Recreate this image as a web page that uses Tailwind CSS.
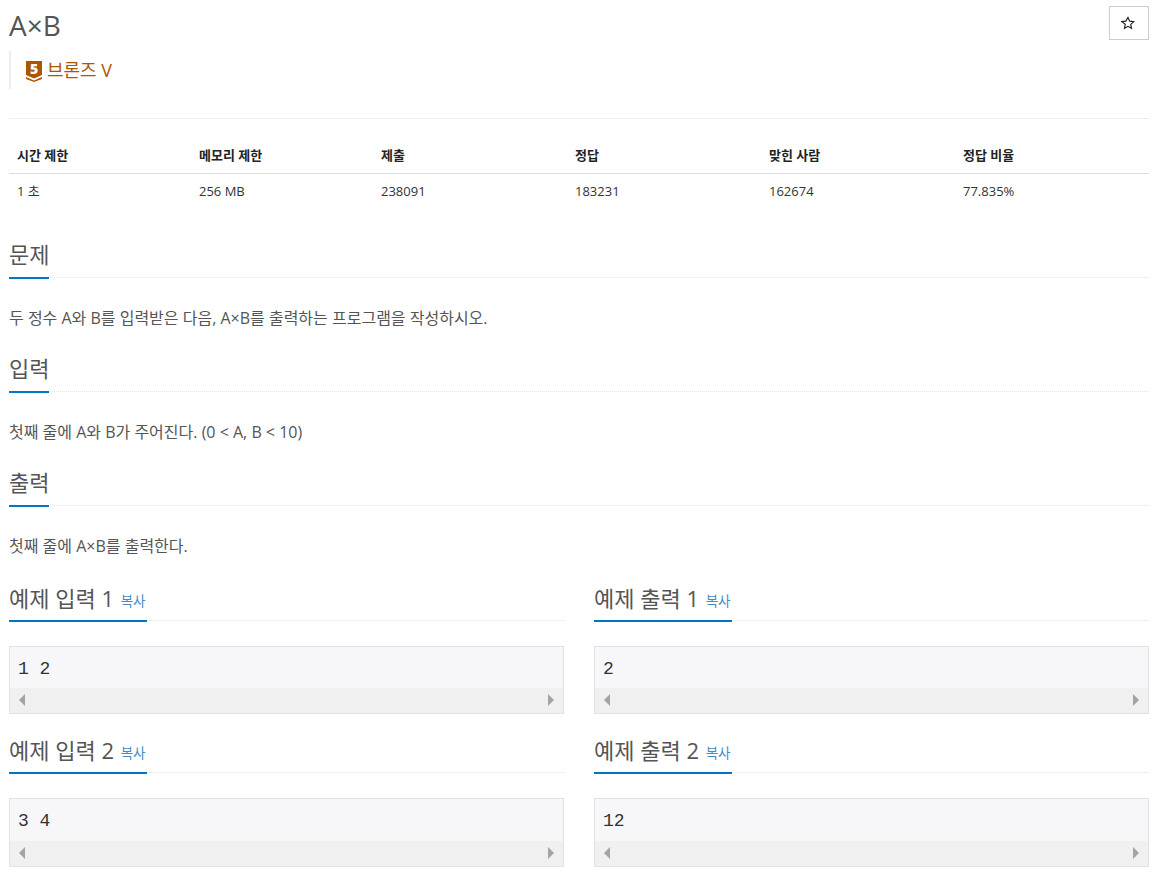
<!DOCTYPE html>
<html lang="ko">
  <head>
    <meta charset="UTF-8" />
    <title>A×B</title>
    <script src="https://cdn.jsdelivr.net/npm/@tailwindcss/browser@4"></script>
  </head>
  <body class="bg-white text-[#333] overflow-hidden font-['Open_Sans','Noto_Sans_CJK_KR',sans-serif]">
    <div class="w-[1164px] h-[878px] pl-[9px] pr-[15px]">
      <!-- Title -->
      <div class="flex justify-between h-[51px]">
        <h1 class="text-[28px] leading-[38px] mt-[6px] text-[#555]">A×B</h1>
        <button class="w-[40px] h-[34px] mt-[6px] border border-[#ccc] flex items-center justify-center">
          <svg class="-ml-[2px] -mt-[1px]" width="14" height="14" viewBox="0 0 24 24" fill="none" stroke="#222" stroke-width="2"><path d="M12 2.5l2.9 6.3 6.9.8-5.1 4.7 1.4 6.8-6.1-3.4-6.1 3.4 1.4-6.8L1.3 9.6l6.9-.8z" /></svg>
        </button>
      </div>
      <div class="h-[38px] border-l-[2px] border-[#eee] pl-[14px] flex items-center gap-[4px] pt-[1px]">
        <svg class="overflow-visible" width="18" height="22" viewBox="0 0 18 22">
          <path d="M1 1h16v14l-8 3.5L1 15z" fill="#ad5600" />
          <path d="M1 17l8 3.5 8-3.5v2l-8 3-8-3z" fill="#ad5600" />
          <text x="9" y="13.5" text-anchor="middle" font-size="14" font-weight="800" fill="#fff" font-family="Open Sans">5</text>
        </svg>
        <span class="text-[18px] text-[#ad5600]">브론즈 V</span>
      </div>

      <div class="h-px bg-[#eee] mt-[29px]"></div>

      <!-- Stats table -->
      <div class="grid grid-cols-[182px_182px_194px_194px_194px_194px] mt-[20px] text-[13px]">
        <div class="h-[35px] border-b border-[#ddd] pl-[8px] pt-[7px] font-bold text-[#222]">시간 제한</div>
        <div class="h-[35px] border-b border-[#ddd] pl-[8px] pt-[7px] font-bold text-[#222]">메모리 제한</div>
        <div class="h-[35px] border-b border-[#ddd] pl-[8px] pt-[7px] font-bold text-[#222]">제출</div>
        <div class="h-[35px] border-b border-[#ddd] pl-[8px] pt-[7px] font-bold text-[#222]">정답</div>
        <div class="h-[35px] border-b border-[#ddd] pl-[8px] pt-[7px] font-bold text-[#222]">맞힌 사람</div>
        <div class="h-[35px] border-b border-[#ddd] pl-[8px] pt-[7px] font-bold text-[#222]">정답 비율</div>
        <div class="pl-[8px] pt-[8px] text-[#333]">1 초</div>
        <div class="pl-[8px] pt-[8px]">256 MB</div>
        <div class="pl-[8px] pt-[8px]">238091</div>
        <div class="pl-[8px] pt-[8px]">183231</div>
        <div class="pl-[8px] pt-[8px]">162674</div>
        <div class="pl-[8px] pt-[8px]">77.835%</div>
      </div>

      <!-- Problem text -->
      <section class="mt-[37px] h-[114px]">
        <div class="h-[39px] border-b border-dotted border-[#e5e5e5]">
          <h2 class="inline-block h-[40px] border-b-[2px] border-[#0076c0] text-[22px] leading-[28px] pt-[1px] text-[#555]">문제</h2>
        </div>
        <p class="mt-[30px] text-[16px] leading-[20px] text-[#555]">두 정수 A와 B를 입력받은 다음, A×B를 출력하는 프로그램을 작성하시오.</p>
      </section>
      <section class="h-[114px]">
        <div class="h-[39px] border-b border-dotted border-[#e5e5e5]">
          <h2 class="inline-block h-[40px] border-b-[2px] border-[#0076c0] text-[22px] leading-[28px] pt-[1px] text-[#555]">입력</h2>
        </div>
        <p class="mt-[30px] text-[16px] leading-[20px] text-[#555]">첫째 줄에 A와 B가 주어진다. (0 &lt; A, B &lt; 10)</p>
      </section>
      <section class="h-[114px]">
        <div class="h-[39px] border-b border-dotted border-[#e5e5e5]">
          <h2 class="inline-block h-[40px] border-b-[2px] border-[#0076c0] text-[22px] leading-[28px] pt-[1px] text-[#555]">출력</h2>
        </div>
        <p class="mt-[30px] text-[16px] leading-[20px] text-[#555]">첫째 줄에 A×B를 출력한다.</p>
      </section>

      <!-- Samples -->
      <div class="grid grid-cols-2 gap-x-[30px] w-[1140px] mt-[5px]">
        <div class="h-[152px]">
          <div class="h-[35px] border-b border-dotted border-[#e5e5e5]">
            <h2 class="inline-block h-[36px] border-b-[2px] border-[#0076c0] text-[22px] leading-[24px] w-[138px] whitespace-nowrap text-[#555]">예제 입력 1 <a class="text-[13.5px] text-[#428bca] ml-[1px] relative -top-[1px]">복사</a></h2>
          </div>
          <div class="mt-[25px] h-[68px] border border-[#e1e1e8] bg-[#f7f7f9] flex flex-col">
            <pre class="h-[41px] pl-[8px] pt-[12px] text-[18px] leading-[20px] text-[#333] font-['Liberation_Mono','DejaVu_Sans_Mono',monospace]">1 2</pre>
            <div class="h-[25px] bg-[#f0f0f0] flex items-center justify-between px-[9px]">
              <svg width="6" height="12" viewBox="0 0 6 12"><path d="M6 0v12L0 6z" fill="#a3a3a3" /></svg>
              <svg width="6" height="12" viewBox="0 0 6 12"><path d="M0 0v12l6-6z" fill="#a3a3a3" /></svg>
            </div>
          </div>
        </div>
        <div class="h-[152px]">
          <div class="h-[35px] border-b border-dotted border-[#e5e5e5]">
            <h2 class="inline-block h-[36px] border-b-[2px] border-[#0076c0] text-[22px] leading-[24px] w-[138px] whitespace-nowrap text-[#555]">예제 출력 1 <a class="text-[13.5px] text-[#428bca] ml-[1px] relative -top-[1px]">복사</a></h2>
          </div>
          <div class="mt-[25px] h-[68px] border border-[#e1e1e8] bg-[#f7f7f9] flex flex-col">
            <pre class="h-[41px] pl-[8px] pt-[12px] text-[18px] leading-[20px] text-[#333] font-['Liberation_Mono','DejaVu_Sans_Mono',monospace]">2</pre>
            <div class="h-[25px] bg-[#f0f0f0] flex items-center justify-between px-[9px]">
              <svg width="6" height="12" viewBox="0 0 6 12"><path d="M6 0v12L0 6z" fill="#a3a3a3" /></svg>
              <svg width="6" height="12" viewBox="0 0 6 12"><path d="M0 0v12l6-6z" fill="#a3a3a3" /></svg>
            </div>
          </div>
        </div>
        <div class="h-[152px]">
          <div class="h-[35px] border-b border-dotted border-[#e5e5e5]">
            <h2 class="inline-block h-[36px] border-b-[2px] border-[#0076c0] text-[22px] leading-[24px] w-[138px] whitespace-nowrap text-[#555]">예제 입력 2 <a class="text-[13.5px] text-[#428bca] ml-[1px] relative -top-[1px]">복사</a></h2>
          </div>
          <div class="mt-[25px] h-[69px] border border-[#e1e1e8] bg-[#f7f7f9] flex flex-col">
            <pre class="h-[42px] pl-[8px] pt-[12px] text-[18px] leading-[20px] text-[#333] font-['Liberation_Mono','DejaVu_Sans_Mono',monospace]">3 4</pre>
            <div class="h-[25px] bg-[#f0f0f0] flex items-center justify-between px-[9px]">
              <svg width="6" height="12" viewBox="0 0 6 12"><path d="M6 0v12L0 6z" fill="#a3a3a3" /></svg>
              <svg width="6" height="12" viewBox="0 0 6 12"><path d="M0 0v12l6-6z" fill="#a3a3a3" /></svg>
            </div>
          </div>
        </div>
        <div class="h-[152px]">
          <div class="h-[35px] border-b border-dotted border-[#e5e5e5]">
            <h2 class="inline-block h-[36px] border-b-[2px] border-[#0076c0] text-[22px] leading-[24px] w-[138px] whitespace-nowrap text-[#555]">예제 출력 2 <a class="text-[13.5px] text-[#428bca] ml-[1px] relative -top-[1px]">복사</a></h2>
          </div>
          <div class="mt-[25px] h-[69px] border border-[#e1e1e8] bg-[#f7f7f9] flex flex-col">
            <pre class="h-[42px] pl-[8px] pt-[12px] text-[18px] leading-[20px] text-[#333] font-['Liberation_Mono','DejaVu_Sans_Mono',monospace]">12</pre>
            <div class="h-[25px] bg-[#f0f0f0] flex items-center justify-between px-[9px]">
              <svg width="6" height="12" viewBox="0 0 6 12"><path d="M6 0v12L0 6z" fill="#a3a3a3" /></svg>
              <svg width="6" height="12" viewBox="0 0 6 12"><path d="M0 0v12l6-6z" fill="#a3a3a3" /></svg>
            </div>
          </div>
        </div>
      </div>
    </div>
  </body>
</html>
